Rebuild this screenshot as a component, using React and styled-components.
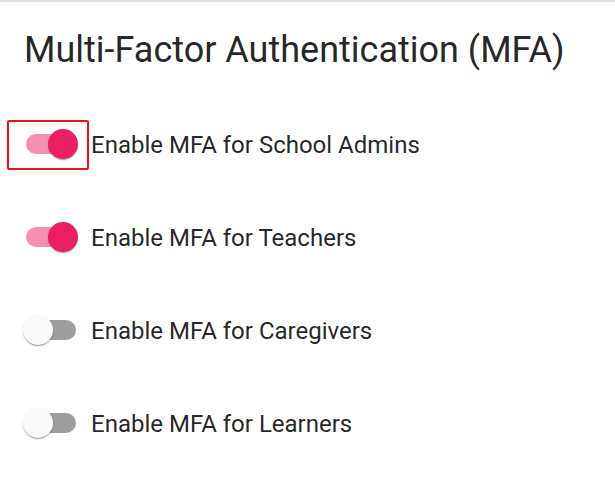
import React, { useState } from 'react'
import styled, { createGlobalStyle } from 'styled-components'

const GlobalStyle = createGlobalStyle`
    html, body {
        margin: 0;
        padding: 0;
        background: #fff;
    }
    body {
        font-family: Roboto, "Liberation Sans", Arial, sans-serif;
        color: rgba(0, 0, 0, 0.87);
    }
`

const Page = styled.div`
    border-top: 2px solid #e2e2e2;
    height: 490px;
    box-sizing: border-box;
    padding: 27px 0 0 0;
`

const Title = styled.h1`
    margin: 0 0 49px 24px;
    font-size: 36px;
    font-weight: 400;
    line-height: 42px;
    letter-spacing: 0;
`

const List = styled.div`
    display: flex;
    flex-direction: column;
    gap: 43px;
`

const Row = styled.label`
    display: flex;
    align-items: center;
    gap: 2px;
    height: 50px;
    cursor: pointer;
`

const SwitchRoot = styled.span`
    position: relative;
    flex: none;
    width: 82px;
    height: 50px;
    margin-left: 7px;
    box-sizing: border-box;
    border: 2px solid ${p => (p.$highlight ? '#f01010' : 'transparent')};
    border-radius: 2px;
`

const Track = styled.span`
    position: absolute;
    left: 17px;
    top: 12px;
    width: 50px;
    height: 20px;
    border-radius: 10px;
    background: ${p => (p.$on ? '#f48fb1' : '#9e9e9e')};
`

const Thumb = styled.span`
    position: absolute;
    top: 7px;
    left: ${p => (p.$on ? '39px' : '14px')};
    width: 30px;
    height: 30px;
    border-radius: 50%;
    background: ${p => (p.$on ? '#e91e63' : '#fafafa')};
    box-shadow: 0 2px 1px -1px rgba(0, 0, 0, 0.2), 0 1px 1px 0 rgba(0, 0, 0, 0.14),
        0 1px 3px 0 rgba(0, 0, 0, 0.12);
    transition: left 150ms;
`

const Label = styled.span`
    font-size: 24px;
    line-height: 1.5;
`

const options = [
    { key: 'admins', label: 'Enable MFA for School Admins', on: true },
    { key: 'teachers', label: 'Enable MFA for Teachers', on: true },
    { key: 'caregivers', label: 'Enable MFA for Caregivers', on: false },
    { key: 'learners', label: 'Enable MFA for Learners', on: false },
]

function Switch({ on, highlight, onToggle }) {
    return (
        <SwitchRoot $highlight={highlight} onClick={onToggle}>
            <Track $on={on} />
            <Thumb $on={on} />
        </SwitchRoot>
    )
}

export default function App() {
    const [state, setState] = useState(
        Object.fromEntries(options.map(o => [o.key, o.on]))
    )

    const toggle = key => {
        setState(s => ({ ...s, [key]: !s[key] }))
    }

    return (
        <Page>
            <GlobalStyle />
            <Title>Multi-Factor Authentication (MFA)</Title>
            <List>
                {options.map((o, i) => (
                    <Row key={o.key}>
                        <Switch on={state[o.key]} highlight={i === 0} onToggle={() => toggle(o.key)} />
                        <Label>{o.label}</Label>
                    </Row>
                ))}
            </List>
        </Page>
    )
}
